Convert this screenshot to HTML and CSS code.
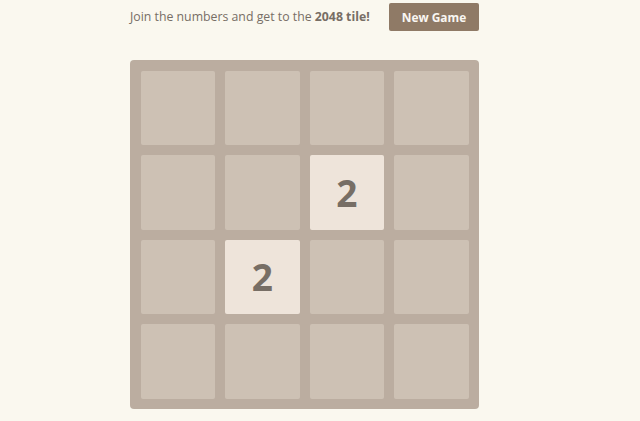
FILE: index.html
```html
<!DOCTYPE html>
<html lang="en">
<head>
<meta charset="utf-8">
<title>2048</title>
<link rel="stylesheet" href="styles.css">
</head>
<body>
  <div class="container">
    <div class="above-game">
      <p class="game-intro">Join the numbers and get to the <strong>2048 tile!</strong></p>
      <a class="restart-button">New Game</a>
    </div>
    <div class="game-container">
      <div class="grid">
        <div class="cell"></div><div class="cell"></div><div class="cell"></div><div class="cell"></div>
        <div class="cell"></div><div class="cell"></div><div class="cell tile-2">2</div><div class="cell"></div>
        <div class="cell"></div><div class="cell tile-2">2</div><div class="cell"></div><div class="cell"></div>
        <div class="cell"></div><div class="cell"></div><div class="cell"></div><div class="cell"></div>
      </div>
    </div>
  </div>
</body>
</html>
```
FILE: styles.css
```css
html, body {
  margin: 0;
  padding: 0;
  background: #faf8ef;
  color: #776e65;
  font-family: "Open Sans", "Noto Sans", Arial, sans-serif;
}

.container {
  width: 349px;
  margin-left: 130px;
}

.above-game {
  display: flex;
  align-items: center;
  justify-content: space-between;
  height: 28px;
  margin-top: 3px;
}

.game-intro {
  margin: 0;
  font-size: 12.3px;
  line-height: 28px;
}

.game-intro strong {
  font-weight: 700;
}

.restart-button {
  display: block;
  width: 90px;
  height: 28px;
  line-height: 28px;
  text-align: center;
  background: #8f7a66;
  color: #f9f6f2;
  border-radius: 2px;
  font-weight: 700;
  font-size: 11.9px;
}

.game-container {
  margin-top: 29px;
  background: #bbada0;
  border-radius: 4px;
  padding: 10.5px;
  box-sizing: border-box;
  width: 349px;
  height: 349px;
}

.grid {
  display: grid;
  grid-template-columns: repeat(4, 1fr);
  grid-template-rows: repeat(4, 1fr);
  gap: 10px;
  height: 100%;
}

.cell {
  background: #cdc1b4;
  border-radius: 2px;
  display: flex;
  align-items: center;
  justify-content: center;
}

.tile-2 {
  background: #eee4da;
  color: #776e65;
  font-weight: 700;
  font-size: 37px;
}
```
